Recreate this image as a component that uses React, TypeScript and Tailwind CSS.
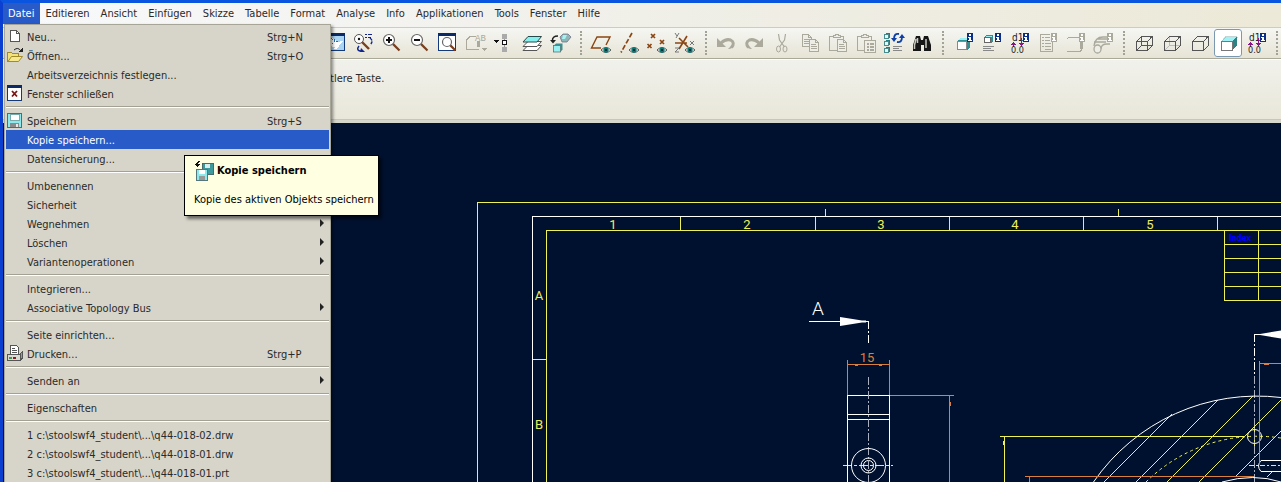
import type { ReactNode } from 'react';

const menuTitles = [
  'Datei', 'Editieren', 'Ansicht', 'Einfügen', 'Skizze', 'Tabelle', 'Format',
  'Analyse', 'Info', 'Applikationen', 'Tools', 'Fenster', 'Hilfe',
];

const GRAY = '#aaa99c';

function Svg({ children }: { children: ReactNode }) {
  return (
    <svg viewBox="0 0 28 28" className="block size-7" fill="none" shapeRendering="crispEdges" aria-hidden="true">
      {children}
    </svg>
  );
}

function Smooth({ children }: { children: ReactNode }) {
  return <g shapeRendering="geometricPrecision">{children}</g>;
}

function InfoBadge({ color = '#0c2f86' }: { color?: string }) {
  return (
    <g>
      <rect x="18" y="4" width="6" height="9" fill={color} />
      <path d="M20 5h2v2h-2zM19 8h3v3h1v1h-4v-1h1v-2h-1z" fill="#fff" />
    </g>
  );
}

function Eye() {
  return (
    <Smooth>
      <path d="M14 21q5-5 10 0q-5 5-10 0z" fill="#fff" stroke="#555" />
      <circle cx="19" cy="21" r="2.700" fill="#067a74" />
      <circle cx="19" cy="21" r="1" fill="#012" />
    </Smooth>
  );
}

function Lens({ x, y, r, sign }: { x: number; y: number; r: number; sign?: string }) {
  return (
    <Smooth>
      <path d={`M${x + r * 0.7} ${y + r * 0.7}L21.500 21.500`} stroke="#7a3f1d" strokeWidth="2.200" />
      <circle cx={x} cy={y} r={r} fill="#fff" stroke="#666" strokeWidth="1.200" />
      {sign && <path d={sign} stroke="#111" strokeWidth="2" />}
    </Smooth>
  );
}

function Cube({ mode }: { mode: 'wire' | 'hidden' | 'plain' | 'shaded' }) {
  if (mode === 'shaded') {
    return (
      <Svg>
        <path d="M7 12.500l4-5h12l-5 5z" fill="#9ff3f6" stroke="#8aa" strokeWidth=".5" />
        <path d="M18 12.500l5-5v9l-5 5z" fill="#2f8385" />
        <path d="M7.500 12.500h10.500v9h-10.500z" fill="#fff" stroke="#777" />
      </Svg>
    );
  }
  return (
    <Svg>
      {mode !== 'plain' && (
        <path d="M11.500 7.500v9h10M11.500 16.500l-5 5" stroke={mode === 'wire' ? '#555' : '#bbb'} />
      )}
      <path d="M6.500 12.500h11v9h-11zM6.500 12.500l5-5h10.500v9.500l-4.500 4.500M17.500 12.500l4.500-5" stroke="#555" />
    </Svg>
  );
}

function DimInfo() {
  return (
    <Svg>
      <text x="7" y="12" fontSize="10" fill="#222" fontFamily="DejaVu Sans Condensed, sans-serif">d1</text>
      <path d="M8.500 13v5M6 15.500h5M7 14.500h3M16.500 9v8M14 14.500h5M15 15.500h3" stroke="#8c128c" />
      <text x="6" y="24" fontSize="9" fill="#222" fontFamily="DejaVu Sans Condensed, sans-serif">0.0</text>
      <InfoBadge />
    </Svg>
  );
}

function SheetOutline({ x, y }: { x: number; y: number }) {
  return (
    <g transform={`translate(${x} ${y})`}>
      <path d="M.5.500h6l3 3v9h-9z" fill="#efeee6" stroke={GRAY} />
      <path d="M6.500.500v3h3M2 5.500h5M2 7.500h6M2 9.500h6" stroke={GRAY} />
    </g>
  );
}

function UndoArrow() {
  return (
    <Smooth>
      <path d="M5 9v9h9z" fill={GRAY} />
      <path d="M9 14q5-4.500 9.500-3q5 2.500 1 7.500" stroke={GRAY} strokeWidth="3" />
      <path d="M19 17l-3 3q3 .5 5-2z" fill={GRAY} />
    </Smooth>
  );
}

type Tool = { name: string; icon: ReactNode; active?: boolean };

const viewTools: Tool[] = [
  {
    name: 'Neu aufbauen',
    icon: (
      <Svg>
        <rect x="4.500" y="4.500" width="18" height="17" fill="#a9d4f2" stroke="#143a7c" />
        <rect x="4" y="4" width="19" height="3" fill="#0b2a66" />
        <path d="M8 8l9 5-3 6-6-2z" fill="#fff" />
        <path d="M9 9l2 2M12 10l1 3M14 12l2 1M10 14l1 1" stroke="#2b6cb5" />
        <path d="M13 20l7-8" stroke="#fff" strokeWidth="2" />
      </Svg>
    ),
  },
  {
    name: 'Drehzentrum',
    icon: (
      <Svg>
        <Smooth>
          <path d="M12 13l7 7" stroke="#7a3f1d" strokeWidth="2.400" />
          <circle cx="9" cy="10" r="4.500" fill="#fff" stroke="#555" />
          <circle cx="9" cy="10" r="1.200" fill="#111" />
          <path d="M9 17q-3 4 1 5h2" stroke="#12268c" strokeWidth="1.400" />
          <path d="M11 19l4 4h-5z" fill="#12268c" />
          <path d="M20 9q4 3 0 7" stroke="#12268c" strokeWidth="1.400" strokeDasharray="3 1" />
        </Smooth>
        <path d="M15 5.500h2M18 5.500h4M15 8.500h2M18 8.500h3" stroke="#12268c" />
      </Svg>
    ),
  },
  { name: 'Vergrößern', icon: <Svg><Lens x={11} y={11} r={5.500} sign="M8 11h6M11 8v6" /></Svg> },
  { name: 'Verkleinern', icon: <Svg><Lens x={11} y={11} r={5.500} sign="M8 11h6" /></Svg> },
  {
    name: 'Einpassen',
    icon: (
      <Svg>
        <rect x="4.500" y="4.500" width="17" height="17" fill="#fff" stroke="#143a7c" />
        <rect x="4" y="4" width="18" height="3" fill="#0b2a66" />
        <Lens x={13} y={13} r={4.500} />
      </Svg>
    ),
  },
  {
    name: 'Ansicht ausrichten',
    icon: (
      <Svg>
        <path d="M14 7.500h-6l-3.500 3.500v9.500h12" stroke={GRAY} />
        <rect x="15" y="12" width="3" height="6" fill={GRAY} />
        <text x="13" y="12" fontSize="9" fill={GRAY} fontFamily="Liberation Mono, monospace">AB</text>
        <path d="M19 19h6l-3 3z" fill={GRAY} />
      </Svg>
    ),
  },
  {
    name: 'Modellbaum',
    icon: (
      <Svg>
        <path d="M4 11h5l-2.500 3z" fill="#111" />
        <path d="M14.500 9v10" stroke="#999" />
        <rect x="12" y="4.500" width="5" height="5" fill="#aaa" />
        <rect x="12.500" y="11.500" width="4" height="4" fill="#fff" stroke="#111" />
        <rect x="12" y="18" width="5" height="5" fill="#aaa" />
      </Svg>
    ),
  },
  {
    name: 'Folien',
    icon: (
      <Svg>
        <Smooth>
          <path d="M5 21.500l5-5h13.500l-4.500 5z" fill="#fff" stroke="#555" />
          <path d="M5 17.500l5-5h13.500l-4.500 5z" fill="#fff" stroke="#555" />
          <path d="M5 13l5-5.500h13.500l-4.500 5.500z" fill="#86f0ee" stroke="#264a4a" />
        </Smooth>
      </Svg>
    ),
  },
  {
    name: 'Ansichtsmanager',
    icon: (
      <Svg>
        <Smooth>
          <path d="M14 8l3-3h5l3 3-4 5h-5z" fill="#8fb5b8" stroke="#667" strokeWidth=".7" />
          <path d="M17 6h4l-2 4h-3z" fill="#a5f2f2" />
          <path d="M12 7q-6 0-5.500 5" stroke="#222" strokeWidth="1.500" />
          <path d="M4 11h6l-3 3.500z" fill="#222" />
          <path d="M8 16.500l2-2h6.500v6l-2 2.500z" fill="#3b8f92" />
          <rect x="7.500" y="16.500" width="7" height="6.500" fill="#98f0f2" stroke="#577" strokeWidth=".8" />
        </Smooth>
      </Svg>
    ),
  },
];

const BROWN = '#8b4513';

const datumTools: Tool[] = [
  {
    name: 'Bezugsebenen',
    icon: <Svg><Smooth><path d="M14 19H4.500L10 8h13l-4 8" stroke={BROWN} strokeWidth="1.400" /></Smooth><Eye /></Svg>,
  },
  {
    name: 'Bezugsachsen',
    icon: <Svg><Smooth><path d="M17 4L6 23.500" stroke={BROWN} strokeWidth="1.700" strokeDasharray="5 2" /></Smooth><Eye /></Svg>,
  },
  {
    name: 'Bezugspunkte',
    icon: (
      <Svg>
        <Smooth>
          <path d="M8 5l4 4m0-4l-4 4M17 11l4 4m0-4l-4 4M4.500 15l4 4m0-4l-4 4" stroke={BROWN} strokeWidth="1.700" />
        </Smooth>
        <Eye />
      </Svg>
    ),
  },
  {
    name: 'Koordinatensysteme',
    icon: (
      <Svg>
        <Smooth>
          <path d="M4 14h12M8 9l9 9M16 7L8 20" stroke={BROWN} strokeWidth="1.600" />
          <path d="M4 4l2 3m2-3l-3 5M19 12l4 4m0-4l-4 4M4 19h4l-4 4h4" stroke="#777" />
        </Smooth>
        <Eye />
      </Svg>
    ),
  },
];

function Clipboard() {
  return (
    <g>
      <path d="M5.500 7.500h14v14h-14z" stroke={GRAY} />
      <path d="M9.500 8.500v-2h2v-1h3v1h2v2z" fill="#efeee6" stroke={GRAY} />
    </g>
  );
}

const editTools: Tool[] = [
  { name: 'Rückgängig', icon: <Svg><UndoArrow /></Svg> },
  { name: 'Wiederherstellen', icon: <Svg><g transform="matrix(-1 0 0 1 28 0)"><UndoArrow /></g></Svg> },
  {
    name: 'Ausschneiden',
    icon: (
      <Svg>
        <Smooth>
          <path d="M10.500 5l1 6 5 7M17.500 5l-1 6-5 7" stroke={GRAY} strokeWidth="1.200" />
          <ellipse cx="10.500" cy="20" rx="2" ry="3" stroke={GRAY} />
          <ellipse cx="17" cy="20" rx="2" ry="3" stroke={GRAY} />
        </Smooth>
      </Svg>
    ),
  },
  { name: 'Kopieren', icon: <Svg><SheetOutline x={6} y={5} /><SheetOutline x={13} y={10} /></Svg> },
  { name: 'Einfügen', icon: <Svg><Clipboard /><SheetOutline x={13} y={10} /></Svg> },
  {
    name: 'Inhalte einfügen',
    icon: (
      <Svg>
        <Clipboard />
        <rect x="12.500" y="11.500" width="11" height="12" fill="#efeee6" stroke={GRAY} />
        <path d="M15 14.500h2M18 14.500h4M15 17.500h2M18 17.500h4M15 20.500h2M18 20.500h4" stroke={GRAY} strokeWidth="2" />
      </Svg>
    ),
  },
  {
    name: 'Regenerieren',
    icon: (
      <Svg>
        {[5, 12, 19].map((y) => (
          <g key={y}>
            <path d={`M5 ${y}l1-1h4v4l-1 1z`} fill="#257f82" />
            <rect x="4.500" y={y + 0.5} width="4" height="4" fill="#d9fbfb" stroke="#4c8b8d" />
          </g>
        ))}
        <path d="M13 17.500h9M13 19.500h6M13 21.500h9" stroke="#888" />
        <Smooth>
          <path d="M19 5q-5-1-5 5M17 13q5 1 5-5" stroke="#0d3fa8" strokeWidth="1.800" />
          <path d="M11 9h6l-3 4zM19 9h6l-3-4z" fill="#0d3fa8" />
        </Smooth>
      </Svg>
    ),
  },
  {
    name: 'Suchen',
    icon: (
      <Svg>
        <Smooth>
          <path d="M8 7h4l1 4h2l1-4h4l3 9v6h-7v-6h-3v6H5v-6z" fill="#161616" />
          <path d="M8 10l-1.500 6v4M18 10v9M9.500 9v5" stroke="#c8c8c0" strokeWidth="1.500" />
        </Smooth>
      </Svg>
    ),
  },
];

const infoTools: Tool[] = [
  {
    name: 'Modellinfo',
    icon: (
      <Svg>
        <path d="M8 12l3-3h10v9l-3 3z" fill="#2f8f92" />
        <path d="M9 11l2-2h9l-2 2z" fill="#9aeff2" />
        <rect x="8.500" y="12.500" width="9" height="8" fill="#fff" stroke="#888" />
        <InfoBadge />
      </Svg>
    ),
  },
  {
    name: 'KE-Info',
    icon: (
      <Svg>
        <path d="M7 8l2-2h7v6l-2 2z" fill="#2f8f92" />
        <path d="M8 8l1.500-1.500h6L14 8z" fill="#9aeff2" />
        <rect x="7.500" y="8.500" width="6" height="5" fill="#fff" stroke="#666" />
        <path d="M6 17.500h11M6 19.500h8M6 21.500h11" stroke="#888" />
        <InfoBadge />
      </Svg>
    ),
  },
  { name: 'Bemaßungsinfo', icon: <DimInfo /> },
  {
    name: 'Stückliste',
    icon: (
      <Svg>
        <path d="M17 5.500H7.500v17h12V13" stroke={GRAY} />
        <path d="M9 8.500h2M12 8.500h5M9 11.500h2M12 11.500h5M9 14.500h2M12 14.500h6M9 17.500h2M12 17.500h6M12 20.500h6" stroke={GRAY} />
        <InfoBadge color={GRAY} />
      </Svg>
    ),
  },
  {
    name: 'Kanteninfo',
    icon: (
      <Svg>
        <path d="M6 9.500l2-1h10M6 22.500h13l2-2" stroke={GRAY} />
        <rect x="19" y="13" width="3" height="7" fill={GRAY} />
        <InfoBadge color={GRAY} />
      </Svg>
    ),
  },
  {
    name: 'Rohrinfo',
    icon: (
      <Svg>
        <Smooth>
          <path d="M5 17q1-9 9-9h4M12 20q0-5 6-5h3M5 13h12M9 10h9" stroke={GRAY} strokeWidth="1.300" />
          <ellipse cx="8.500" cy="20" rx="3.500" ry="4" fill="#efeee6" stroke={GRAY} strokeWidth="1.300" />
        </Smooth>
        <InfoBadge color={GRAY} />
      </Svg>
    ),
  },
];

const displayTools: Tool[] = [
  { name: 'Drahtmodell', icon: <Cube mode="wire" /> },
  { name: 'Verdeckte Kanten', icon: <Cube mode="hidden" /> },
  { name: 'Sichtbare Kanten', icon: <Cube mode="plain" /> },
  { name: 'Schattiert', icon: <Cube mode="shaded" />, active: true },
  { name: 'Bemaßungen anzeigen', icon: <DimInfo /> },
];

function Grip() {
  return (
    <div className="flex w-[13px] shrink-0 justify-center py-0.5">
      <div className="w-0 border-l-2 border-dotted border-[#a3a297]" />
    </div>
  );
}

function ToolGroup({ tools }: { tools: Tool[] }) {
  return (
    <div className="flex shrink-0">
      {tools.map((t) => (
        <button
          key={t.name}
          type="button"
          aria-label={t.name}
          aria-pressed={t.active}
          className={
            t.active
              ? 'size-7 shrink-0 rounded-[3px] bg-white outline outline-1 -outline-offset-1 outline-[#7a98af]'
              : 'size-7 shrink-0'
          }
        >
          {t.icon}
        </button>
      ))}
    </div>
  );
}

/* ---- Menu icons, 16 x 16 ---- */

function Small({ children }: { children: ReactNode }) {
  return (
    <svg viewBox="0 0 16 16" className="block size-4" fill="none" shapeRendering="crispEdges" aria-hidden="true">
      {children}
    </svg>
  );
}

const newIcon = (
  <Small>
    <path d="M3.500 2.500h6l3 3v8h-9z" fill="#fff" stroke="#555" />
    <path d="M9.500 2.500v3h3" stroke="#555" />
  </Small>
);

const openIcon = (
  <Small>
    <path d="M.5 14.500v-9h4l1 1h6v3" fill="#f3e27c" stroke="#a08a2a" />
    <path d="M1 14.500l3.500-5h11l-4 5z" fill="#f6e88c" stroke="#a08a2a" shapeRendering="geometricPrecision" />
    <path d="M7 3q4-3.500 7 1" stroke="#222" shapeRendering="geometricPrecision" />
    <path d="M11.500 4.500h4v-4z" fill="#222" />
  </Small>
);

const closeIcon = (
  <Small>
    <rect x=".5" y=".5" width="14" height="15" fill="#fff" stroke="#143a7c" />
    <rect width="15" height="3" fill="#0b2a66" />
    <path d="M5 6l5 5.500M10 6l-5 5.500" stroke="#7d1414" strokeWidth="1.800" shapeRendering="geometricPrecision" />
  </Small>
);

const saveIcon = (
  <Small>
    <rect x=".5" y="1.500" width="14" height="14" fill="#8ce9ec" stroke="#4d6d70" />
    <rect x="3" y="2" width="9" height="6" fill="#fff" stroke="#7aa" />
    <rect x="3" y="11" width="9" height="4" fill="#8b8b8b" />
    <rect x="9" y="12" width="2" height="3" fill="#e8e8e8" />
  </Small>
);

const printIcon = (
  <Small>
    <path d="M3.500 9.500v-9h6l2 2v7" fill="#fff" stroke="#555" />
    <path d="M5 3.500h3M5 5.500h5M5 7.500h5" stroke="#555" />
    <path d="M13 9l2.500-2v6l-2.500 2.500z" fill="#999" stroke="#555" />
    <rect x=".5" y="9.500" width="12.500" height="6" fill="#dcdad0" stroke="#555" />
    <rect x="2" y="12" width="3" height="2" fill="#3c9a4a" />
    <rect x="6" y="12" width="3" height="2" fill="#8a1d1d" />
  </Small>
);

type Entry = { label: string; keys?: string; icon?: ReactNode; sub?: boolean; hot?: boolean };

const fileMenu: Entry[][] = [
  [
    { label: 'Neu...', keys: 'Strg+N', icon: newIcon },
    { label: 'Öffnen...', keys: 'Strg+O', icon: openIcon },
    { label: 'Arbeitsverzeichnis festlegen...' },
    { label: 'Fenster schließen', icon: closeIcon },
  ],
  [
    { label: 'Speichern', keys: 'Strg+S', icon: saveIcon },
    { label: 'Kopie speichern...', hot: true },
    { label: 'Datensicherung...' },
  ],
  [
    { label: 'Umbenennen' },
    { label: 'Sicherheit' },
    { label: 'Wegnehmen', sub: true },
    { label: 'Löschen', sub: true },
    { label: 'Variantenoperationen', sub: true },
  ],
  [{ label: 'Integrieren...' }, { label: 'Associative Topology Bus', sub: true }],
  [{ label: 'Seite einrichten...' }, { label: 'Drucken...', keys: 'Strg+P', icon: printIcon }],
  [{ label: 'Senden an', sub: true }],
  [{ label: 'Eigenschaften' }],
  [
    { label: '1 c:\\stoolswf4_student\\...\\q44-018-02.drw' },
    { label: '2 c:\\stoolswf4_student\\...\\q44-018-01.drw' },
    { label: '3 c:\\stoolswf4_student\\...\\q44-018-01.prt' },
  ],
];

function MenuRow({ entry }: { entry: Entry }) {
  return (
    <button
      type="button"
      role="menuitem"
      className={
        entry.hot
          ? 'flex h-[19px] w-full items-start bg-[#285ac8] text-left leading-[21px] whitespace-nowrap text-white'
          : 'flex h-[19px] w-full items-start text-left leading-[21px] whitespace-nowrap'
      }
    >
      <span className="w-[21px] shrink-0 pt-px pl-px">{entry.icon}</span>
      <span className="flex-1">{entry.label}</span>
      {entry.keys && <span className="w-[62px]">{entry.keys}</span>}
      {entry.sub && (
        <svg viewBox="0 0 4 8" className="mt-[5px] mr-[5px] h-2 w-1" aria-hidden="true">
          <path d="M0 0l4 4-4 4z" fill="#222" />
        </svg>
      )}
    </button>
  );
}

function FileMenu() {
  return (
    <div
      role="menu"
      className="absolute top-6 left-1 z-10 w-[327px] border border-[#a6a597] bg-[#d7d5c9] px-px py-0.5 shadow-[2px_2px_3px_rgba(0,0,0,0.45)]"
    >
      {fileMenu.map((section, i) => (
        <div key={i}>
          {i > 0 && <div className="my-[3px] h-0.5 border-t border-b border-t-[#a3a194] border-b-white" />}
          {section.map((entry) => (
            <MenuRow key={entry.label} entry={entry} />
          ))}
        </div>
      ))}
    </div>
  );
}

function Tooltip() {
  return (
    <div
      role="tooltip"
      className="absolute top-[155px] left-[184px] z-20 flex w-[195px] flex-col gap-3 border border-black bg-[#ffffe1] px-[9px] pt-[5px] pb-2 text-black shadow-[3px_3px_3px_rgba(0,0,0,0.5)]"
    >
      <div className="flex items-center gap-[3px]">
        <svg viewBox="0 0 20 20" className="block size-5" fill="none" shapeRendering="crispEdges" aria-hidden="true">
          <rect x="8.500" y="2.500" width="11" height="11" fill="#3e9a9c" stroke="#49696b" />
          <rect x="11" y="3" width="5" height="4" fill="#d8eeee" />
          <path d="M6 .5q-3 0-3 3" stroke="#111" strokeWidth="1.400" />
          <path d="M1 3h5l-2.500 3z" fill="#111" />
          <rect x="2.500" y="8.500" width="11" height="11" fill="#8ce9ec" stroke="#55777a" />
          <rect x="5" y="9" width="6" height="4" fill="#fff" />
          <rect x="5" y="15" width="6" height="4" fill="#999" />
        </svg>
        <strong className="leading-[20px] font-bold whitespace-nowrap">Kopie speichern</strong>
      </div>
      <span className="leading-[14px] whitespace-nowrap">Kopie des aktiven Objekts speichern</span>
    </div>
  );
}

/* ---- Sheet ---- */

function Drawing() {
  const yellow = '#eef058';
  const orange = '#d9803f';
  return (
    <svg
      viewBox="3 123 1278 359"
      preserveAspectRatio="xMinYMin slice"
      className="block size-full"
      fill="none"
      role="img"
      aria-label="q44-018-02.drw"
    >
      <g stroke={yellow} shapeRendering="crispEdges">
        <path d="M1281 202.500H477.500V482M1281 230.500H546.500V482" />
        <path d="M680.500 216v14M815.500 216v14M949.500 216v14M1083.500 216v14M1217.500 216v14M825.500 209v7M1118.500 209v7M533 359.500h14" />
        <path d="M1224.500 230V300.500H1281M1258.500 230V300M1224 244.500h57M1224 258.500h57M1224 272.500h57M1224 286.500h57" />
        <path d="M1000 436.500h244M1004.500 436V482M1003.500 441v4" />
        <path d="M843 465.500h50" strokeDasharray="9 2 3 2" />
        <path d="M1254.500 421v31" />
        <path d="M1249 465.500h32" strokeDasharray="5 2 2 2" />
      </g>
      <g stroke={yellow}>
        <path d="M1104 482l68-68M1136 482l82-82M1167 482l86-86M1199 482l82-82M1235 477l46-46M1267 477l5-5" />
        <path d="M1146 482A159 159 0 0 1 1281 438" strokeDasharray="3 3" />
      </g>
      <g stroke="#fff" shapeRendering="crispEdges">
        <path d="M1281 216.500H532.500V482" />
        <path d="M809 321.500h59.500" />
        <path d="M868.500 321v24" strokeDasharray="8 2 2 2" />
        <path d="M847.500 482V395.500h42V482M847 414.500h42M847 419.500h42" />
        <path d="M1254.500 334v42" strokeDasharray="8 2 2 2" />
        <path d="M1254 334.500h6" />
      </g>
      <g stroke="#aab0c0" shapeRendering="crispEdges">
        <path d="M868.500 377V482M1254.500 376V482" strokeDasharray="8 2 2 2" />
      </g>
      <path d="M840 317l22 3.500h4v2h-4l-22 3.500zM1257 334.500l24-4v8z" fill="#fff" />
      <g stroke="#fff">
        <circle cx="868.500" cy="465.500" r="17" />
        <circle cx="868.500" cy="465.500" r="7.500" />
        <circle cx="868.500" cy="465.500" r="5" />
        <path d="M1093.500 482A199 199 0 0 1 1281 397.500" />
        <circle cx="1254.500" cy="436.500" r="7" />
        <path d="M1281 460.500h-20q-5 5.500 0 11h20" />
        <path d="M1222 482q32-9 59 0" />
      </g>
      <g stroke={orange} shapeRendering="crispEdges">
        <path d="M847.500 360v35M889.500 360v35M847 364.500h42M855 365.500h3M879 365.500h3" />
        <path d="M890 395.500h64M949.500 395V482M950.500 402v4" />
        <path d="M1025 476.500h229M1029.500 476V482" />
        <path d="M1259.500 361v102M1259 363.500h22M1264 364.500h5" />
      </g>
      <g fontFamily="Roboto, sans-serif" textAnchor="middle" fill={yellow} fontSize="13">
        <text x="613" y="229">1</text>
        <text x="747" y="229">2</text>
        <text x="881" y="229">3</text>
        <text x="1015" y="229">4</text>
        <text x="1150" y="229">5</text>
        <text x="539" y="300">A</text>
        <text x="539" y="429">B</text>
        <text x="818" y="315" fill="#fff" fontSize="19" fontWeight="300">A</text>
        <text x="867" y="362" fill={orange}>15</text>
        <text x="1240" y="241" fill="#0000ff" fontSize="9" fontWeight="700">Index</text>
      </g>
    </svg>
  );
}

export default function App() {
  return (
    <div className="relative flex h-screen flex-col overflow-hidden border-t-[3px] border-l-[3px] border-t-[#0a55e0] border-l-[#0a3fd0] bg-[#eceadf] font-['DejaVu_Sans_Condensed','DejaVu_Sans',sans-serif] text-[11px] text-[#2a2a2a]">
      <nav className="flex h-[25px] shrink-0 border-b border-[#cfccba] bg-linear-to-r from-[#f8f9fb] via-[#f0efe8] to-[#ece9d8]">
        {menuTitles.map((title, i) => (
          <button
            key={title}
            type="button"
            className={
              i === 0
                ? 'h-[21px] shrink-0 bg-[#285ac8] pt-0.5 pr-1.5 pl-[5px] text-white'
                : 'h-[21px] shrink-0 pt-0.5 pr-1.5 pl-[5px]'
            }
          >
            {title}
          </button>
        ))}
      </nav>

      <div
        role="toolbar"
        className="flex h-[31px] shrink-0 overflow-hidden border-b border-[#aaa897] bg-linear-to-b from-[#f6f6f3] to-[#e6e4d5] py-px pl-[319px]"
      >
        <ToolGroup tools={viewTools} />
        <Grip />
        <ToolGroup tools={datumTools} />
        <Grip />
        <ToolGroup tools={editTools} />
        <Grip />
        <ToolGroup tools={infoTools} />
        <Grip />
        <ToolGroup tools={displayTools} />
        <Grip />
      </div>

      <div className="h-[61px] shrink-0 border-t border-b border-t-white border-b-[#c9c6b5] bg-linear-to-b from-[#f1f1ec] to-[#e9e7d9] pt-3 pl-[327px]">
        <p className="leading-[14px]">tlere Taste.</p>
      </div>
      <div className="h-[3px] shrink-0 bg-[#d5d6cc]" />

      <main className="min-h-0 flex-1 bg-[#00112f]">
        <Drawing />
      </main>

      <div className="absolute -top-[3px] -left-[3px]">
        <FileMenu />
        <Tooltip />
      </div>
    </div>
  );
}
